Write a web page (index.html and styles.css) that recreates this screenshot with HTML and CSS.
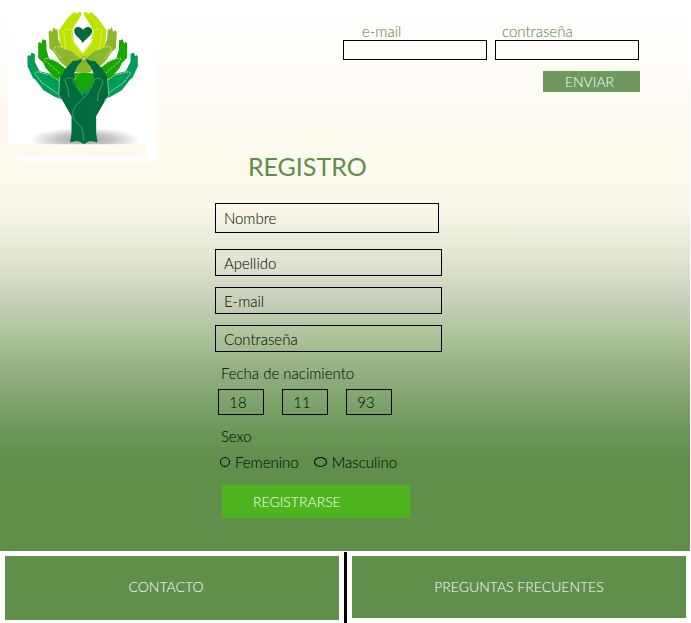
FILE: index.html
```html
<!DOCTYPE html>
<html lang="es">
<head>
<meta charset="utf-8">
<meta name="viewport" content="width=device-width, initial-scale=1">
<title>Registro</title>
<link rel="stylesheet" href="styles.css">
</head>
<body>
<div class="page">
  <header class="header">
    <svg class="logo" viewBox="24 31 446 453" role="img" aria-label="Árbol de manos">
      <defs>
        <radialGradient id="shadow">
          <stop offset="0" stop-color="#a4a4a4"/>
          <stop offset="0.5" stop-color="#c6c6c6"/>
          <stop offset="1" stop-color="#fff"/>
        </radialGradient>
        <clipPath id="ground"><path d="M24 31H470V434H24Z"/></clipPath>
        <g id="side">
          <path fill="#009c58" d="M82 170L87 166L90 170L94 159L99 161L104 163V186L118 215L150 222L185 244L184 299L165 292L130 272L106 240L98 234L82 200Z"/>
          <path fill="#18a600" d="M114 130L119 127L123 132L128 118L133 122L138 121L139 150L146 176L172 186L202 212L184 250L168 240L136 204L130 190L114 174Z"/>
          <path fill="#8bb82a" d="M145 96L151 92L156 97L160 83L166 90L172 88L174 118L182 140L215 150L249 178V219L205 207L180 186L160 156L148 146Z"/>
          <path fill="#bee300" d="M176 92L205 52L222 37L228 42L239 36L243 38V47L225 75L217 90L222 128L249 162V182L215 154L180 138Z"/>
          <g fill="none" stroke="#f1f7c8" stroke-width="2">
            <path stroke-dasharray="7 3" d="M197 150L190 93L197 87L214 91L217 118L224 136L246 162"/>
            <path stroke-dasharray="7 3" d="M182 176L161 151L163 143L174 140L216 154L242 180"/>
            <path stroke-dasharray="6 4" d="M178 220L132 181L135 175L160 181L196 204"/>
            <path stroke-dasharray="8 2" d="M172 282L124 248L104 222L110 216L150 226L178 244"/>
          </g>
        </g>
        <path id="hand" fill="#006b3c" d="M180 234L195 208L218 184L231 183L243 177V186L231 200L223 218L221 240L231 262L250 292V431L232 424L210 428L214 400V350L190 308L176 288Z"/>
      </defs>
      <path fill="#fff" d="M24 31H470V484H52V470H437V434H24Z"/>
      <ellipse cx="254" cy="420" rx="166" ry="36" fill="url(#shadow)" clip-path="url(#ground)"/>
      <use href="#side"/>
      <use href="#side" transform="translate(495 0) scale(-1 1)"/>
      <path fill="#18a600" d="M218 222L249 216L282 222V260L249 292L220 262Z"/>
      <path fill="#009c58" d="M221 262L250 276L278 262L262 296H238Z"/>
      <path fill="#8bb82a" d="M222 216L249 184L276 216L250 220Z"/>
      <use href="#hand"/>
      <use href="#hand" transform="translate(502 0) scale(-1 1)"/>
      <path fill="#006b3c" d="M244 284H258V431L251 432L244 430Z"/>
      <g fill="none" stroke="#69b486" stroke-width="2">
        <path stroke="#bfe0bd" d="M178 232L176 288L188 304"/>
        <path stroke="#bfe0bd" d="M322 236L326 288L312 304"/>
        <path stroke="#8ed08e" d="M224 242C228 222 240 218 254 216"/>
        <path d="M207 292L202 262L195 246C194 234 208 232 218 238L221 252L234 268L251 292"/>
        <path d="M292 304L294 280L308 250C306 232 292 234 282 240L279 252L258 288L232 312C204 344 224 366 238 376C248 386 250 404 250 424"/>
      </g>
      <circle cx="251" cy="178" r="6" fill="#fff3d0" stroke="#6b5a23" stroke-width="2"/>
      <circle cx="251" cy="179" r="2" fill="#6b3c20"/>
      <path fill="#006b3c" d="M248 131C246 120 221 110 222 92C224 78 242 80 249 91C256 78 275 80 276 93C276 110 250 119 248 131Z"/>
    </svg>
    <form class="login">
      <div class="login-fields">
        <div class="login-field">
          <label for="login-email">e-mail</label>
          <input id="login-email" type="email">
        </div>
        <div class="login-field login-field-password">
          <label for="login-password">contraseña</label>
          <input id="login-password" type="password">
        </div>
      </div>
      <button class="send" type="submit">ENVIAR</button>
    </form>
  </header>
  <main class="register">
    <h1>REGISTRO</h1>
    <form>
      <input class="field field-name" type="text" placeholder="Nombre" aria-label="Nombre">
      <input class="field" type="text" placeholder="Apellido" aria-label="Apellido">
      <input class="field" type="email" placeholder="E-mail" aria-label="E-mail">
      <input class="field" type="password" placeholder="Contraseña" aria-label="Contraseña">
      <fieldset>
        <legend>Fecha de nacimiento</legend>
        <div class="dates">
          <input type="text" value="18" aria-label="Día">
          <input type="text" value="11" aria-label="Mes">
          <input type="text" value="93" aria-label="Año">
        </div>
      </fieldset>
      <fieldset>
        <legend>Sexo</legend>
        <div class="options">
          <label><input type="radio" name="sexo">Femenino</label>
          <label><input class="wide" type="radio" name="sexo">Masculino</label>
        </div>
      </fieldset>
      <button class="submit" type="submit">REGISTRARSE</button>
    </form>
  </main>
</div>
<footer class="footer">
  <a class="contact" href="#contacto">CONTACTO</a>
  <span class="divider"></span>
  <a class="faq" href="#preguntas">PREGUNTAS FRECUENTES</a>
</footer>
</body>
</html>
```

FILE: styles.css
```css
* {
  box-sizing: border-box;
}

body {
  margin: 0;
  padding-right: 1px;
  background: #fff;
  color: #000;
  font: 300 15px/20px Lato, "Open Sans", sans-serif;
}

input,
button {
  font: inherit;
  color: inherit;
}

input {
  margin: 0;
  border: 1px solid #000;
  border-radius: 0;
  background: transparent;
}

.page {
  padding-bottom: 33px;
  background: linear-gradient(#fff 0, #fffdf9 60px, #fef9f2 110px, #fdfaee 150px, #fbf8eb 205px, #e0e4d0 260px, #c5ceb5 305px, #b0c79d 330px, #8fae80 375px, #70995c 425px, #608e4b 460px, #608e4b 100%);
}

.header {
  display: flex;
  justify-content: space-between;
  align-items: flex-start;
  padding: 10px 50px 0 8px;
}

.logo {
  display: block;
  width: 149px;
  height: 151px;
}

.login {
  display: flex;
  flex-direction: column;
  align-items: flex-end;
  gap: 11px;
  padding-top: 11px;
}

.login-fields {
  display: flex;
  gap: 8px;
  margin-right: 1px;
}

.login-field {
  display: flex;
  flex-direction: column;
  width: 144px;
  color: #4f8138;
}

.login-field label {
  height: 19px;
  padding-left: 19px;
}

.login-field-password label {
  padding-left: 7px;
}

.login-field input {
  width: 100%;
  height: 20px;
}

.send {
  width: 97px;
  height: 21px;
  padding: 0 4px 0 0;
  border: 0;
  background: #6d985e;
  color: #fff;
}

.send,
.submit,
.footer a {
  font-size: 14px;
}

.register {
  width: 230px;
  margin-left: 31%;
}

h1 {
  margin: 0;
  padding: 0 0 32px 34px;
  color: #608e4b;
  font-size: 25px;
  font-weight: 400;
  line-height: 10px;
}

.field {
  display: block;
  width: 227px;
  height: 27px;
  margin: 0 0 11px 1px;
  padding: 0 8px;
}

.field-name {
  width: 224px;
  height: 30px;
  margin-bottom: 16px;
}

.field::placeholder {
  color: #000;
  opacity: 1;
}

fieldset {
  margin: 0;
  padding: 0;
  border: 0;
}

legend {
  padding: 0 0 0 7px;
}

.dates {
  display: flex;
  gap: 18px;
  padding: 6px 0 11px 4px;
}

.dates input {
  width: 46px;
  height: 26px;
  padding: 0 6px 0 0;
  text-align: center;
}

.options {
  display: flex;
  gap: 15px;
  padding: 6px 0 13px 6px;
}

.options label {
  display: flex;
  align-items: center;
  gap: 5px;
}

.options input {
  width: 10px;
  height: 10px;
  border-radius: 50%;
  appearance: none;
}

.options .wide {
  width: 13px;
}

.options input:checked {
  background: #000;
}

.submit {
  display: block;
  width: 188px;
  height: 33px;
  margin-left: 8px;
  padding: 0 38px 0 0;
  border: 0;
  background: #4db41e;
  color: #fff;
}

.footer {
  display: flex;
  height: 72px;
  padding: 0 4px 0 5px;
}

.footer a {
  flex: 1;
  height: 64px;
  margin-top: 5px;
  background: #608e4b;
  color: #fff;
  line-height: 62px;
  text-align: center;
  text-decoration: none;
}

.footer .contact {
  text-indent: -12px;
}

.footer .faq {
  height: 62px;
}

.divider {
  width: 3px;
  margin: 1px 5px 0;
  background: #000;
}
```
